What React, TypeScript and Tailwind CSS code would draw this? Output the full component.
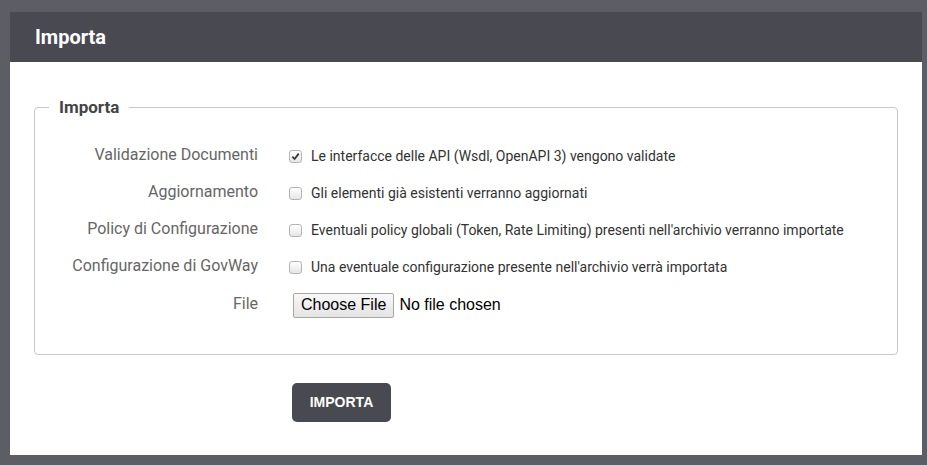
function Check({ checked }: { checked: boolean }) {
  return (
    <span className="w-[13px] h-[13px] rounded-[3px] border border-[#b4b4b4] bg-gradient-to-b from-white to-[#e6e6e6] flex items-center justify-center shrink-0">
      {checked && (
        <svg width="9" height="9" viewBox="0 0 10 10">
          <path d="M1.5 5.2 L4 7.8 L8.6 1.8" fill="none" stroke="#333" strokeWidth="1.9" />
        </svg>
      )}
    </span>
  );
}

export default function App() {
  const rows = [
    { label: 'Validazione Documenti', text: 'Le interfacce delle API (Wsdl, OpenAPI 3) vengono validate', checked: true },
    { label: 'Aggiornamento', text: 'Gli elementi già esistenti verranno aggiornati', checked: false },
    { label: 'Policy di Configurazione', text: "Eventuali policy globali (Token, Rate Limiting) presenti nell'archivio verranno importate", checked: false },
    { label: 'Configurazione di GovWay', text: "Una eventuale configurazione presente nell'archivio verrà importata", checked: false },
  ];

  return (
    <div className="w-[927px] h-[465px] bg-[#5d5d66] pt-[12px] pl-[10px] font-['Roboto',sans-serif]">
      <div className="w-[912px] h-[443px] bg-white flex flex-col">
        {/* Header */}
        <div className="h-[50px] bg-[#494951] flex items-center pl-[25px]">
          <h1 className="text-[20px] font-bold text-white">Importa</h1>
        </div>

        {/* Body */}
        <div className="px-[24px] pt-[33px]">
          <fieldset className="border border-[#c8c8c8] rounded-[4px] h-[260px] w-[864px] px-[14px] pb-0">
            <legend className="px-[10px] text-[17px] font-bold text-[#444]">Importa</legend>
            <div className="flex flex-col gap-[14px] mt-[24px]">
              {rows.map((row) => (
                <div key={row.label} className="flex items-center h-[23px]">
                  <div className="w-[209px] text-right text-[16px] text-[#666] -mt-[2px]">{row.label}</div>
                  <div className="flex items-center ml-[31px]">
                    <Check checked={row.checked} />
                    <span className="ml-[9px] text-[14px] text-[#333]">{row.text}</span>
                  </div>
                </div>
              ))}
              <div className="flex items-start h-[26px]">
                <div className="w-[209px] text-right text-[16px] text-[#666] -mt-[1px]">File</div>
                <div className="ml-[35px] flex items-center">
                  <button className="h-[25px] px-[7px] border border-[#a6a6a6] rounded-[2px] bg-gradient-to-b from-[#f8f8f8] to-[#e4e4e4] text-[16px] text-black font-['Liberation_Sans',sans-serif] leading-none">
                    Choose File
                  </button>
                  <span className="ml-[5px] text-[16px] text-black font-['Liberation_Sans',sans-serif]">No file chosen</span>
                </div>
              </div>
            </div>
          </fieldset>

          <div className="pl-[258px] mt-[28px]">
            <button className="w-[99px] h-[39px] bg-[#494951] rounded-[5px] text-white text-[14px] font-bold font-['Liberation_Sans',sans-serif]">
              IMPORTA
            </button>
          </div>
        </div>
      </div>
    </div>
  );
}
